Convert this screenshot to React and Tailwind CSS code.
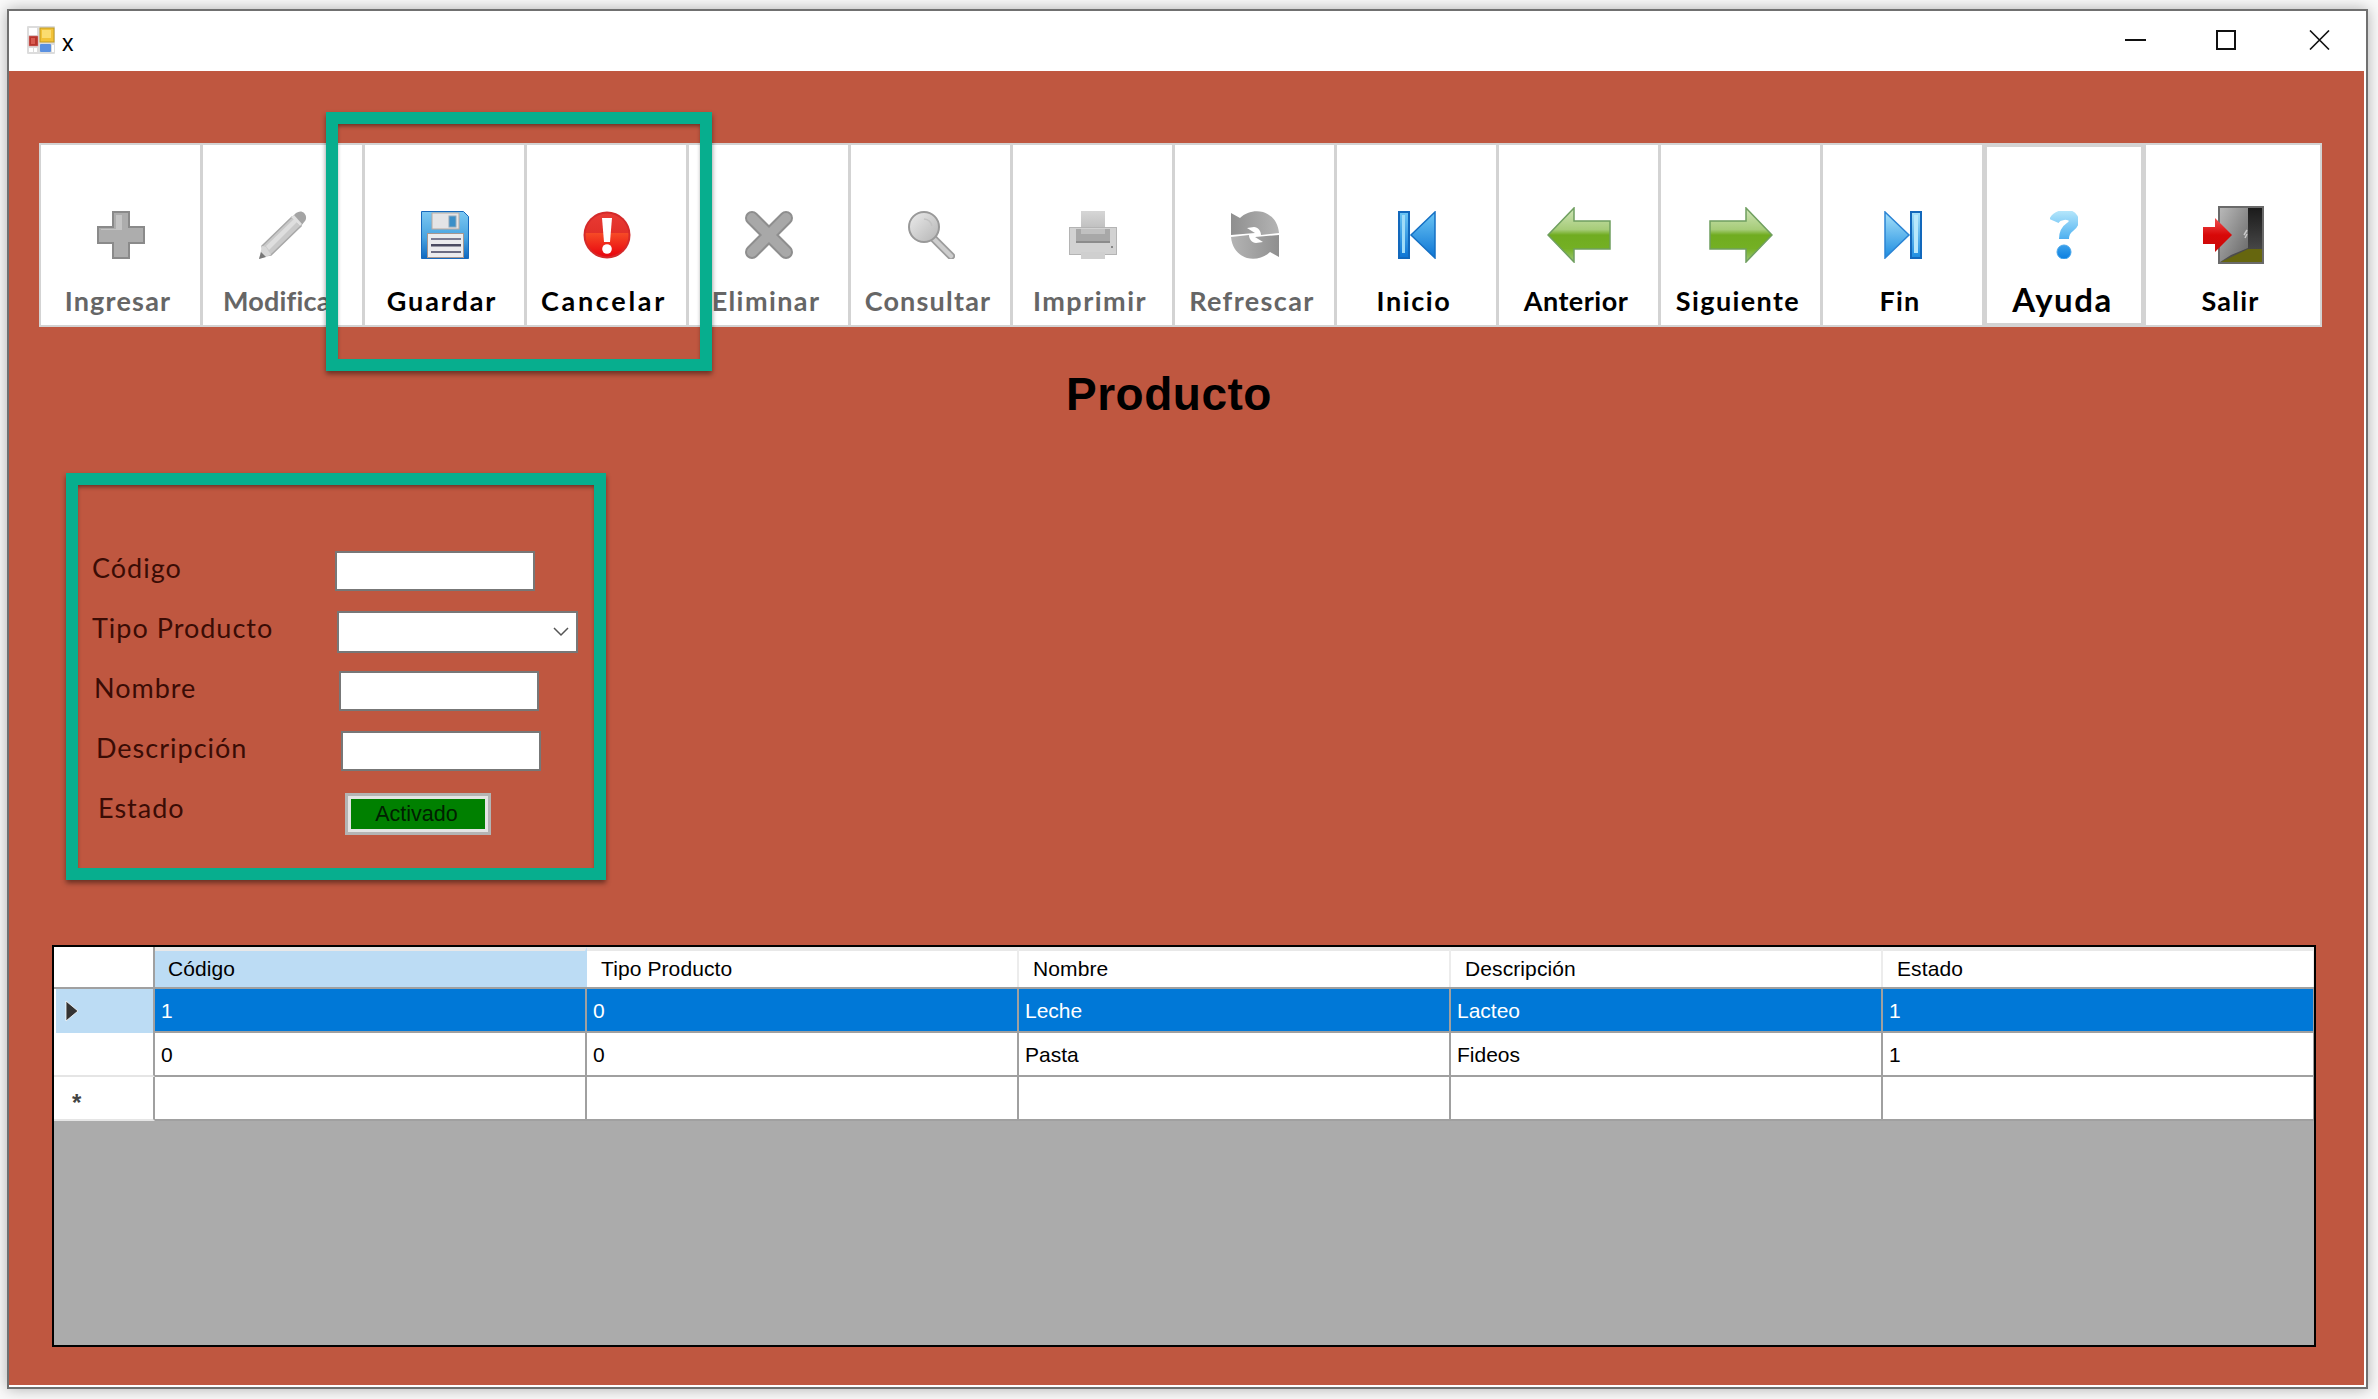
import React from 'react';

function PlusIcon() {
  return (
    <svg width="48" height="48" viewBox="0 0 48 48">
      <path d="M16 1h16v15h15v16H32v15H16V32H1V16h15z" fill="#adadad" stroke="#8a8a8a" strokeWidth="2" />
      <path d="M19 4h6v15H4v-1h15z" fill="#c4c4c4" />
    </svg>
  );
}

function PencilIcon() {
  return (
    <svg width="48" height="48" viewBox="0 0 48 48">
      <path d="M3 35L33 6l9 9-30 29-7 1z" fill="#c9c9c9" stroke="#a8a8a8" strokeWidth="1.5" />
      <path d="M7 35L35 8l3 3-28 28z" fill="#dedede" />
      <path d="M33 6l4-4c3-2 6-2 8 0s3 5 1 8l-4 5z" fill="#a4a4a4" />
      <path d="M35 4l8 9-2 2-9-9z" fill="#e0e0e0" />
      <path d="M0 48l3-13 4 1 5 8z" fill="#d8d8d8" />
      <path d="M0 48l2-7 5 5z" fill="#777" />
    </svg>
  );
}

function SaveIcon() {
  return (
    <svg width="48" height="48" viewBox="0 0 48 48">
      <defs>
        <linearGradient id="saveBlue" x1="0" y1="0" x2="0" y2="1">
          <stop offset="0" stopColor="#7cc8f2" />
          <stop offset="0.55" stopColor="#4aa4e0" />
          <stop offset="1" stopColor="#0f68c0" />
        </linearGradient>
      </defs>
      <path d="M0.5 0.5h42l5 5v42h-47z" fill="url(#saveBlue)" stroke="#1769bd" />
      <rect x="11" y="2" width="27" height="16" fill="#e4e4e6" stroke="#b9a9a0" />
      <rect x="28" y="5" width="7" height="11" fill="#3b8fc8" stroke="#8fa8ba" />
      <rect x="6.5" y="22.5" width="36" height="24" fill="#ececee" stroke="#a7968f" />
      <rect x="10" y="27" width="30" height="2" fill="#7c7c92" />
      <rect x="10" y="33" width="30" height="2.5" fill="#4c4c62" />
      <rect x="10" y="40" width="30" height="2" fill="#6c6c82" />
    </svg>
  );
}

function AlertIcon() {
  return (
    <svg width="48" height="48" viewBox="0 0 48 48">
      <defs>
        <linearGradient id="alertRed" x1="0" y1="0" x2="0" y2="1">
          <stop offset="0" stopColor="#e83a34" />
          <stop offset="0.45" stopColor="#e23029" />
          <stop offset="0.46" stopColor="#f64a26" />
          <stop offset="1" stopColor="#e8040e" />
        </linearGradient>
      </defs>
      <circle cx="24" cy="24" r="23.5" fill="#d42a2a" />
      <circle cx="24" cy="24" r="21.5" fill="url(#alertRed)" />
      <path d="M19 7h10l-2 24h-6z" fill="#fff" />
      <circle cx="24" cy="38" r="4.8" fill="#fff" />
    </svg>
  );
}

function CloseGrayIcon() {
  return (
    <svg width="48" height="48" viewBox="0 0 48 48">
      <path d="M7 7L41 41M41 7L7 41" stroke="#8e8e8e" strokeWidth="14" strokeLinecap="round" />
      <path d="M7 7L41 41M41 7L7 41" stroke="#a8a8a8" strokeWidth="10" strokeLinecap="round" />
    </svg>
  );
}

function SearchIcon() {
  return (
    <svg width="48" height="48" viewBox="0 0 48 48">
      <defs>
        <linearGradient id="lens" x1="0" y1="0" x2="1" y2="1">
          <stop offset="0" stopColor="#ececec" />
          <stop offset="1" stopColor="#b4b4b4" />
        </linearGradient>
      </defs>
      <path d="M27 28L44 45" stroke="#9c9c9c" strokeWidth="8" strokeLinecap="round" />
      <path d="M27 28L44 45" stroke="#cdcdcd" strokeWidth="4.5" strokeLinecap="round" />
      <circle cx="17" cy="16" r="15" fill="url(#lens)" stroke="#999" strokeWidth="2" />
      <path d="M17 8a9 9 0 0 1 8 7" fill="none" stroke="#c2c2c2" strokeWidth="1.5" />
    </svg>
  );
}

function PrinterIcon() {
  return (
    <svg width="48" height="48" viewBox="0 0 48 48">
      <defs>
        <linearGradient id="paper" x1="0" y1="0" x2="0" y2="1">
          <stop offset="0" stopColor="#d6d6d6" />
          <stop offset="1" stopColor="#bcbcbc" />
        </linearGradient>
      </defs>
      <rect x="12" y="0" width="24" height="20" fill="url(#paper)" />
      <rect x="0.5" y="16.5" width="47" height="27" fill="#d2d2d2" stroke="#b4b4b4" />
      <rect x="7" y="18" width="34" height="14" fill="#a8a8a8" />
      <rect x="7" y="30" width="34" height="2" fill="#8c8c8c" />
      <rect x="12" y="18" width="24" height="5" fill="#c0c0c0" />
      <rect x="42" y="35" width="2" height="2" fill="#888" />
      <rect x="12" y="41" width="24" height="7" fill="#cfcfcf" />
    </svg>
  );
}

function RefreshIcon() {
  const half = 'M0 2l9 5C15 1 24-1 32 1c9 3 15 10 16 21l-18 2c0-4-3-8-7-8l-7 1 8 5L0 24z';
  return (
    <svg width="48" height="48" viewBox="0 0 48 48">
      <defs>
        <linearGradient id="refreshGray" x1="0" y1="0" x2="1" y2="0">
          <stop offset="0" stopColor="#8f8f8f" />
          <stop offset="1" stopColor="#b4b4b4" />
        </linearGradient>
      </defs>
      <path d={half} fill="url(#refreshGray)" />
      <path d={half} fill="url(#refreshGray)" transform="rotate(180 24 24)" />
    </svg>
  );
}

function FirstIcon() {
  return (
    <svg width="38" height="48" viewBox="0 0 38 48">
      <defs>
        <linearGradient id="firstBlue" x1="0" y1="0" x2="0" y2="1">
          <stop offset="0" stopColor="#6cc6f4" />
          <stop offset="1" stopColor="#0c74d4" />
        </linearGradient>
      </defs>
      <rect x="1" y="1" width="10" height="46" fill="url(#firstBlue)" stroke="#1268bc" strokeWidth="2" />
      <rect x="4" y="4" width="3" height="38" fill="#9fdcf8" />
      <path d="M37 1v46L13 24z" fill="url(#firstBlue)" stroke="#1570c4" strokeWidth="1.5" />
    </svg>
  );
}

function LastIcon() {
  return (
    <svg width="38" height="48" viewBox="0 0 38 48">
      <defs>
        <linearGradient id="lastBlue" x1="0" y1="0" x2="0" y2="1">
          <stop offset="0" stopColor="#a8e2fa" />
          <stop offset="1" stopColor="#1c8ce0" />
        </linearGradient>
      </defs>
      <path d="M1 1v46l24-23z" fill="url(#lastBlue)" stroke="#2b84d4" strokeWidth="1.5" />
      <rect x="27" y="1" width="10" height="46" fill="url(#lastBlue)" stroke="#1268bc" strokeWidth="2" />
      <rect x="30" y="4" width="4" height="38" fill="#b8e8fb" />
    </svg>
  );
}

function ArrowIcon({ left }) {
  const id = left ? 'arrowGreenL' : 'arrowGreenR';
  return (
    <svg width="64" height="56" viewBox="0 0 64 56">
      <defs>
        <linearGradient id={id} x1="0" y1="0" x2="0" y2="1">
          <stop offset="0" stopColor="#cfe4b8" />
          <stop offset="0.4" stopColor="#a6cc78" />
          <stop offset="0.5" stopColor="#70ac20" />
          <stop offset="0.75" stopColor="#74b024" />
          <stop offset="1" stopColor="#9cc878" />
        </linearGradient>
      </defs>
      <path
        d={left ? 'M1 28L27 1v13h36v28H27v13z' : 'M63 28L37 1v13H1v28h36v13z'}
        fill={`url(#${id})`}
        stroke="#6f9f5f"
        strokeWidth="1.5"
      />
    </svg>
  );
}

function HelpIcon() {
  return (
    <svg width="28" height="48" viewBox="0 0 28 48">
      <defs>
        <linearGradient id="helpBlue" gradientUnits="userSpaceOnUse" x1="0" y1="0" x2="0" y2="48">
          <stop offset="0" stopColor="#b4e6fb" />
          <stop offset="0.5" stopColor="#5cb8f2" />
          <stop offset="1" stopColor="#0b7fe0" />
        </linearGradient>
      </defs>
      <path d="M4 10C7 3 20 2 23 7c2 4 0 7-3 9-3 2-6 5-6 12" fill="none" stroke="url(#helpBlue)" strokeWidth="10" />
      <circle cx="14" cy="41" r="7" fill="url(#helpBlue)" stroke="#4aa8ec" />
    </svg>
  );
}

function ExitIcon() {
  return (
    <svg width="61" height="58" viewBox="0 0 61 58">
      <defs>
        <linearGradient id="doorPanel" x1="0" y1="0" x2="1" y2="1">
          <stop offset="0" stopColor="#b8b8b8" />
          <stop offset="1" stopColor="#646464" />
        </linearGradient>
        <linearGradient id="doorDark" x1="0" y1="0" x2="0" y2="1">
          <stop offset="0" stopColor="#1a1a1a" />
          <stop offset="1" stopColor="#555" />
        </linearGradient>
        <linearGradient id="exitRed" x1="0" y1="0" x2="0" y2="1">
          <stop offset="0" stopColor="#f05050" />
          <stop offset="0.5" stopColor="#d80808" />
          <stop offset="1" stopColor="#c80a0a" />
        </linearGradient>
      </defs>
      <rect x="16" y="1" width="44" height="56" fill="url(#doorDark)" stroke="#6a6a6a" strokeWidth="2" />
      <path d="M17 56l11-7 17-7V2H17z" fill="url(#doorPanel)" />
      <path d="M18 56l27-13h14v13z" fill="#66660e" />
      <path d="M41 29l3-5M42 32l2-4" stroke="#c8c8c8" strokeWidth="1.5" />
      <path d="M0 21h12V12l17 17-17 17v-8H0z" fill="url(#exitRed)" />
    </svg>
  );
}

function AppIcon() {
  return (
    <svg width="28" height="28" viewBox="0 0 28 28">
      <rect width="28" height="28" rx="1" fill="#dcdcdc" />
      <rect x="2" y="2" width="8" height="7" fill="#fff" />
      <rect x="2" y="10" width="9" height="10" fill="#b8352c" stroke="#d88" strokeWidth="0.5" />
      <rect x="4" y="12" width="4" height="6" fill="#d85a50" />
      <rect x="13" y="2" width="14" height="14" fill="#f2c238" stroke="#c09a20" />
      <rect x="15" y="4" width="9" height="8" fill="#fbdc70" />
      <rect x="13" y="18" width="11" height="8" rx="1" fill="#5a90e0" />
      <rect x="2" y="22" width="4" height="4" fill="#fff" />
      <rect x="7" y="22" width="3" height="4" fill="#fff" />
      <rect x="25" y="19" width="2" height="7" fill="#fff" />
    </svg>
  );
}

const tools = [
  { label: 'Ingresar', icon: <PlusIcon />, text: 'pr-[5px] tracking-[1.2px] text-[#666]' },
  { label: 'Modifica', icon: <PencilIcon />, text: 'self-start pl-[20px] text-[25px] tracking-[0.2px] text-[#666]' },
  { label: 'Guardar', icon: <SaveIcon />, text: 'pr-[5px] tracking-[1.9px] text-black' },
  { label: 'Cancelar', icon: <AlertIcon />, text: 'pr-[5px] tracking-[2.7px] text-black' },
  { label: 'Eliminar', icon: <CloseGrayIcon />, text: 'pr-[5px] tracking-[1.4px] text-[#666]' },
  { label: 'Consultar', icon: <SearchIcon />, text: 'pr-[5px] tracking-[1.2px] text-[#666]' },
  { label: 'Imprimir', icon: <PrinterIcon />, text: 'pr-[5px] tracking-[1.5px] text-[#666]' },
  { label: 'Refrescar', icon: <RefreshIcon />, text: 'pr-[5px] tracking-[1.4px] text-[#666]' },
  { label: 'Inicio', icon: <FirstIcon />, text: 'pr-[5px] tracking-[1.6px] text-black' },
  { label: 'Anterior', icon: <ArrowIcon left />, text: 'pr-[5px] tracking-[0.5px] text-black' },
  { label: 'Siguiente', icon: <ArrowIcon />, text: 'pr-[5px] tracking-[1.4px] text-black' },
  { label: 'Fin', icon: <LastIcon />, text: 'pr-[5px] tracking-[1.2px] text-black' },
];

const formRows = [
  { label: 'Código', labelLeft: 'pl-[14px]', labelW: 'w-[257px]', kind: 'input' },
  { label: 'Tipo Producto', labelLeft: 'pl-[14px]', labelW: 'w-[259px]', kind: 'select' },
  { label: 'Nombre', labelLeft: 'pl-[16px]', labelW: 'w-[261px]', kind: 'input' },
  { label: 'Descripción', labelLeft: 'pl-[18px]', labelW: 'w-[263px]', kind: 'input' },
  { label: 'Estado', labelLeft: 'pl-[20px]', labelW: 'w-[267px]', kind: 'button' },
];

const columns = ['Código', 'Tipo Producto', 'Nombre', 'Descripción', 'Estado'];

const rows = [
  ['1', '0', 'Leche', 'Lacteo', '1'],
  ['0', '0', 'Pasta', 'Fideos', '1'],
  ['', '', '', '', ''],
];

function ToolButton({ label, icon, text }) {
  return (
    <button className="flex h-full w-[162px] flex-col items-center border-y-2 border-l-[3px] border-[#d3d3d3] bg-white first:w-[161px] first:border-l-2">
      <span className="mt-[66px] flex h-12 items-center justify-center">{icon}</span>
      <span className={`mt-[25px] text-[27px] leading-[34px] font-bold whitespace-nowrap ${text}`}>{label}</span>
    </button>
  );
}

export default function App() {
  return (
    <div className="h-[1399px] w-[2378px] overflow-hidden bg-[#fafafa] pt-[9px] pl-[7px] font-['Lato',sans-serif]">
      <div className="flex h-[1380px] w-[2361px] flex-col border-2 border-[#707070] bg-white shadow-[0_0_14px_rgba(0,0,0,0.3)]">
        {/* Title bar */}
        <div className="flex h-[60px] items-center pr-[36px] pb-[2px] pl-[18px]">
          <AppIcon />
          <span className="mt-[6px] ml-[7px] font-['Liberation_Sans',sans-serif] text-[23px] text-black">x</span>
          <div className="ml-auto flex items-center">
            <svg width="21" height="2" viewBox="0 0 21 2"><rect width="21" height="2" fill="#111" /></svg>
            <svg className="ml-[70px]" width="20" height="20" viewBox="0 0 20 20"><rect x="1" y="1" width="18" height="18" fill="none" stroke="#111" strokeWidth="2" /></svg>
            <svg className="ml-[73px]" width="21" height="20" viewBox="0 0 21 20"><path d="M1 0.5L20 19.5M20 0.5L1 19.5" stroke="#111" strokeWidth="1.6" /></svg>
          </div>
        </div>

        {/* Form body */}
        <div className="relative flex-1 border-r-2 border-b-2 border-white bg-[#bf5740] pt-[72px] pl-[30px]">
          <div className="flex h-[184px] w-[2283px]">
            {tools.map((t) => (
              <ToolButton key={t.label} {...t} />
            ))}
            {/* Ayuda has the focus border */}
            <button className="flex h-full w-[164px] flex-col items-center border-x-[5px] border-y-4 border-[#d3d3d3] bg-white">
              <span className="mt-[64px] flex h-12 items-center justify-center"><HelpIcon /></span>
              <span className="mt-[20px] pr-[3px] text-[33px] leading-[40px] font-bold tracking-[1.5px] text-black">Ayuda</span>
            </button>
            <button className="flex h-full flex-1 flex-col items-center border-y-2 border-r-2 border-[#d3d3d3] bg-white">
              <span className="mt-[66px] flex h-12 items-center justify-center"><ExitIcon /></span>
              <span className="mt-[25px] pr-[5px] text-[27px] leading-[34px] font-bold tracking-[1.2px] text-black">Salir</span>
            </button>
          </div>

          <div className="mt-[44px] ml-[1027px] font-['Liberation_Sans',sans-serif] text-[46px] leading-[46px] font-bold tracking-[0.5px] text-black">Producto</div>

          {/* Product fields */}
          <div className="mt-[56px] ml-[27px] h-[407px] w-[540px] border-[12px] border-[#07ae8e] pt-[66px] shadow-[0_3px_5px_rgba(0,0,0,0.45),inset_0_3px_4px_-1px_rgba(0,0,0,0.45)]">
            {formRows.map((r) => (
              <div key={r.label} className="flex h-[60px] items-start">
                <label className={`flex h-[40px] items-center pb-[6px] text-[27px] tracking-[1px] text-[#3a0c05] ${r.labelLeft} ${r.labelW}`}>
                  {r.label}
                </label>
                {r.kind === 'input' && <input className="h-[40px] w-[200px] border-2 border-[#777] bg-white" />}
                {r.kind === 'select' && (
                  <div className="flex h-[42px] w-[241px] items-center justify-end border-2 border-[#777] bg-white pr-[7px]">
                    <svg width="16" height="10" viewBox="0 0 16 10"><path d="M1 1l7 7 7-7" fill="none" stroke="#555" strokeWidth="1.5" /></svg>
                  </div>
                )}
                {r.kind === 'button' && (
                  <button className="mt-[2px] h-[42px] w-[146px] border-[3px] border-[#b4b4b4] bg-[#e4e4e4] p-[3px]">
                    <span className="flex h-full items-center justify-center bg-[#008000] pr-[3px] font-['Liberation_Sans',sans-serif] text-[21.5px] text-[#012001]">Activado</span>
                  </button>
                )}
              </div>
            ))}
          </div>

          {/* Products grid */}
          <div className="mt-[65px] ml-[13px] h-[402px] w-[2264px] overflow-hidden border-2 border-black bg-[#ababab] font-['Liberation_Sans',sans-serif] text-[21px] text-black">
            <div className="flex h-[42px] border-b-2 border-[#a0a0a0] bg-white">
              <div className="w-[101px] shrink-0 border-r-2 border-[#a0a0a0]" />
              {columns.map((c, i) => (
                <div
                  key={c}
                  className={`flex w-[432px] shrink-0 items-center border-t-4 border-r-2 border-t-[#e8e8e8] tracking-[0.1px] ${i === 0 ? 'border-r-[#bcdcf4] bg-[#bcdcf4] pl-[13px]' : 'border-r-[#ececec] pl-[14px]'}`}
                >
                  {c}
                </div>
              ))}
            </div>
            {rows.map((row, i) => (
              <div key={i} className={`flex h-[44px] ${i === 0 ? 'bg-[#0078d7] text-white' : 'bg-white'}`}>
                <div className={`flex w-[101px] shrink-0 items-center border-r-2 border-r-[#a0a0a0] bg-white ${i === 0 ? '' : 'border-b-2 border-b-[#e5e5e5]'}`}>
                  {i === 0 && (
                    <div className="ml-[2px] flex h-full flex-1 items-center bg-[#bcdcf4] pl-[9px]">
                      <svg width="14" height="22" viewBox="0 0 14 22"><path d="M1 1l12 10L1 21z" fill="#333" stroke="#fff" strokeWidth="0.8" /></svg>
                    </div>
                  )}
                  {i === 2 && <span className="mt-[10px] ml-[18px] text-[24px] leading-[24px] font-bold text-[#444]">*</span>}
                </div>
                {row.map((v, j) => (
                  <div key={j} className="flex w-[432px] shrink-0 items-center border-r-2 border-b-2 border-[#a0a0a0] pt-[2px] pl-[6px]">
                    {v}
                  </div>
                ))}
              </div>
            ))}
          </div>

          {/* Callout around Guardar and Cancelar */}
          <div className="absolute top-[41px] left-[317px] h-[259px] w-[386px] border-[12px] border-[#07ae8e] shadow-[0_3px_5px_rgba(0,0,0,0.45),inset_0_3px_4px_-1px_rgba(0,0,0,0.45)]" />
        </div>
      </div>
    </div>
  );
}
